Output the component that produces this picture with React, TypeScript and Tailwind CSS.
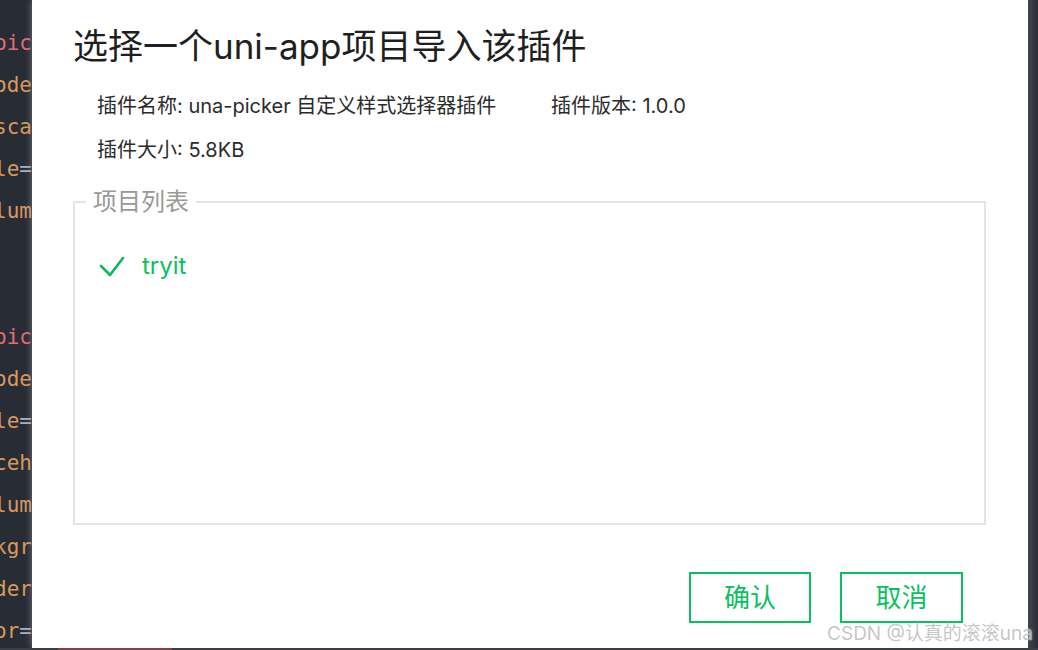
import React from "react";

type Seg = { t: string; c: string };

// editor text peeking out behind the dialog, one entry per line
const codeLines: Seg[][] = [
  [{ t: "<una-pic", c: "text-[#e06c75]" }],
  [{ t: "  mode", c: "text-[#d7995e]" }],
  [{ t: "  :isca", c: "text-[#d7995e]" }],
  [
    { t: "  :title", c: "text-[#d7995e]" },
    { t: "=", c: "text-[#abb2bf]" },
  ],
  [{ t: "  :colum", c: "text-[#d7995e]" }],
  [],
  [],
  [{ t: "<una-pic", c: "text-[#e06c75]" }],
  [{ t: "  mode", c: "text-[#d7995e]" }],
  [
    { t: "  :title", c: "text-[#d7995e]" },
    { t: "=", c: "text-[#abb2bf]" },
  ],
  [{ t: "  placeh", c: "text-[#d7995e]" }],
  [{ t: "  :colum", c: "text-[#d7995e]" }],
  [{ t: "  bkgr", c: "text-[#d7995e]" }],
  [{ t: "  border", c: "text-[#d7995e]" }],
  [
    { t: "  color", c: "text-[#d7995e]" },
    { t: "=", c: "text-[#abb2bf]" },
  ],
];

const projects = ["tryit"];

function CodeStrip() {
  return (
    <div className="w-[32px] shrink-0 overflow-hidden pt-[22px] font-['DejaVu_Sans_Mono',monospace] text-[21px] leading-[42px]">
      {codeLines.map((line, i) => (
        <div key={i} className="flex h-[42px] justify-end whitespace-pre">
          {line.map((s, j) => (
            <span key={j} className={s.c}>
              {s.t}
            </span>
          ))}
        </div>
      ))}
    </div>
  );
}

function Check() {
  return (
    <svg width="26" height="24" viewBox="0 0 26 24" fill="none">
      <path
        d="M2 12 L11 21 L24 4"
        stroke="#0bb85a"
        strokeWidth="2.6"
        strokeLinecap="round"
        strokeLinejoin="round"
      />
    </svg>
  );
}

export default function App() {
  return (
    <div className="relative flex h-[650px] w-[1038px] flex-col overflow-hidden bg-[#282c34] font-['Inter','Noto_Sans_CJK_SC',sans-serif]">
      <div className="flex h-[648px]">
        <CodeStrip />
        <div className="w-[996px] shrink-0 bg-white pl-[41px] pr-[42px] pt-[21px] shadow-[0_0_7px_rgba(150,150,160,0.7)]">
          <h1 className="text-[35px] leading-[50px] text-[#1f1f1f]">
            选择一个uni-app项目导入该插件
          </h1>

          <div className="mt-[20px] flex flex-col gap-[14px] pl-[24px] text-[20px] leading-[30px] text-[#2b2b2b]">
            <div className="flex">
              <span className="w-[454px]">插件名称: una-picker 自定义样式选择器插件</span>
              <span>插件版本: 1.0.0</span>
            </div>
            <div>插件大小: 5.8KB</div>
          </div>

          <fieldset className="mt-[21px] h-[339px] border-2 border-[#e3e3e3] px-[11px]">
            <legend className="px-[7px] text-[24px] leading-[32px] text-[#999999]">项目列表</legend>
            <ul className="pt-[32px]">
              {projects.map((p) => (
                <li key={p} className="flex h-[32px] items-center gap-[17px] pl-[13px] text-[24px] text-[#07c160]">
                  <Check />
                  <span>{p}</span>
                </li>
              ))}
            </ul>
          </fieldset>

          <div className="mt-[47px] flex justify-end gap-[29px] pr-[23px]">
            <button className="flex h-[51px] w-[122px] items-center justify-center border-2 border-[#07c160] text-[26px] text-[#07c160]">
              确认
            </button>
            <button className="flex h-[51px] w-[123px] items-center justify-center border-2 border-[#07c160] text-[26px] text-[#07c160]">
              取消
            </button>
          </div>
        </div>
        <div className="flex-1 bg-gradient-to-r from-[#40444c] to-[#2a2d35]" />
      </div>
      <div className="flex h-[2px] bg-[#3b3e45]">
        <div className="ml-[58px] w-[114px] bg-[#8a3b45]" />
      </div>

      <span className="absolute bottom-[7px] right-[5px] text-[19px] leading-none text-[#b8b8b8]/80 [text-shadow:0_0_2px_rgba(255,255,255,0.9)]">
        CSDN @认真的滚滚una
      </span>
    </div>
  );
}
